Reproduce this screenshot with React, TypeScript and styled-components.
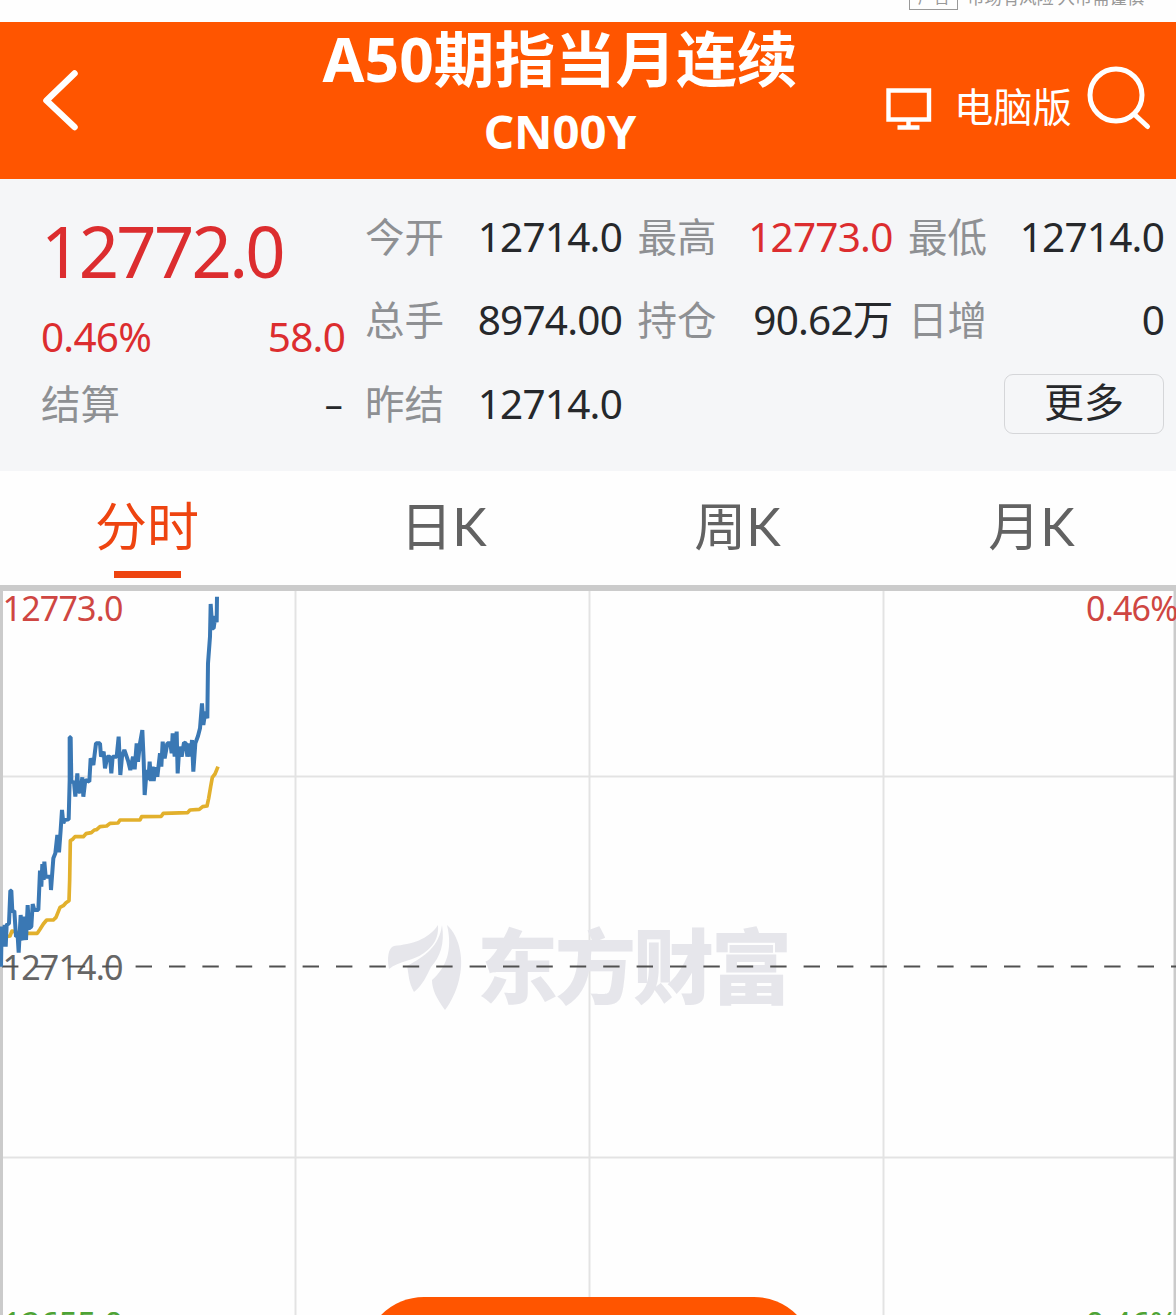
import React from 'react';
import styled, { createGlobalStyle } from 'styled-components';

const ORANGE = '#ff5500';
const RED = '#dc2d2f';
const INK = '#26282b';
const MUTED = '#8e9093';

const GlobalStyle = createGlobalStyle`
  * { box-sizing: border-box; }
  body {
    margin: 0;
    background: #fff;
    font-family: "Noto Sans", "Noto Sans CJK SC", sans-serif;
  }
`;

const Page = styled.div`
  position: relative;
  width: 1176px;
  height: 1315px;
  overflow: hidden;
  background: #fefefe;
`;

const AdStrip = styled.div`
  display: flex;
  justify-content: flex-end;
  align-items: flex-end;
  gap: 9px;
  height: 22px;
  padding: 0 32px 12px 0;
  color: #999;
  font: 17.3px/24px "Noto Sans CJK SC", sans-serif;
  white-space: nowrap;
`;

const AdTag = styled.span`
  flex: none;
  width: 49px;
  height: 26px;
  border: 1.5px solid #999;
  font-size: 16px;
  line-height: 23px;
  text-align: center;
`;

const AdText = styled.span`
  flex: none;
  height: 25px;
`;

const Header = styled.header`
  display: grid;
  grid-template-columns: 320px 480px 1fr;
  height: 157px;
  background: ${ORANGE};
  color: #fff;
`;

const BackButton = styled.div`
  padding: 46px 0 0 40px;
`;

const TitleBlock = styled.div`
  display: flex;
  flex-direction: column;
  align-items: center;
  font-weight: 700;
  white-space: nowrap;
`;

const Title = styled.div`
  height: 76px;
  font-size: 60.6px;
  line-height: 73px;
`;

const Code = styled.div`
  font-size: 47.3px;
  line-height: 66px;
`;

const Tools = styled.div`
  display: flex;
  align-items: flex-start;
  padding-left: 86px;
`;

const DesktopIcon = styled.svg`
  flex: none;
  margin-top: 64px;
`;

const DesktopLabel = styled.span`
  flex: none;
  width: 152px;
  padding: 57px 0 0 22px;
  font-size: 39.3px;
  line-height: 56px;
  white-space: nowrap;
`;

const SearchIcon = styled.svg`
  flex: none;
  margin-top: 42px;
`;

const Quote = styled.section`
  display: grid;
  grid-template-columns: 304px 1fr;
  column-gap: 20px;
  height: 292px;
  padding: 16px 12px 0 41px;
  background: #f5f6f8;
`;

const Summary = styled.div`
  display: grid;
  grid-template-rows: 112px 60px 74px;
`;

const Price = styled.div`
  align-self: center;
  color: ${RED};
  font-size: 70.5px;
  line-height: 110px;
  letter-spacing: -2.7px;
`;

const Row = styled.div`
  display: flex;
  justify-content: space-between;
  align-items: center;
  white-space: nowrap;
`;

const Stats = styled.div`
  display: grid;
  grid-template-columns: 257px 255px 256px;
  grid-template-rows: repeat(3, 83.5px);
  justify-content: space-between;
`;

const Label = styled.span`
  padding-bottom: 4px;
  color: ${MUTED};
  font: 39.5px/50px "Noto Sans CJK SC", sans-serif;
`;

const Value = styled.span<{ $up?: boolean }>`
  color: ${({ $up }) => ($up ? RED : INK)};
  font-size: 40.5px;
  line-height: 56px;
  letter-spacing: -0.8px;
`;

const Dash = styled(Value)`
  padding-right: 3px;
  font-size: 36px;
`;

const MoreButton = styled.div`
  justify-self: end;
  align-self: center;
  width: 160px;
  height: 60px;
  border: 1.5px solid #d5d6d9;
  border-radius: 9px;
  color: ${INK};
  font: 40px/51px "Noto Sans CJK SC", sans-serif;
  text-align: center;
`;

const Tabs = styled.nav`
  display: grid;
  grid-template-columns: repeat(4, 294px);
  height: 114px;
  background: #fefefe;
`;

const Tab = styled.div<{ $active?: boolean }>`
  display: flex;
  flex-direction: column;
  align-items: center;
  padding: 17px 0 0 ${({ $active }) => ($active ? 0 : 5)}px;
  color: ${({ $active }) => ($active ? '#ee4410' : '#626262')};
  font-family: Lato, "Noto Sans CJK SC", sans-serif;
  font-size: 52px;
  line-height: 76px;

  &::after {
    content: '';
    width: 67px;
    height: 7px;
    margin-top: 7px;
    background: ${({ $active }) => ($active ? '#ee4410' : 'transparent')};
  }
`;

const Chart = styled.svg`
  display: block;
  width: 1176px;
  height: 730px;
`;

const AxisText = styled.text`
  font-family: "Noto Sans", sans-serif;
  font-size: 34px;
  letter-spacing: -0.8px;
`;

const WatermarkText = styled.text`
  font-family: "Noto Sans CJK SC", sans-serif;
  font-size: 81px;
  font-weight: 900;
  fill: #e6e6eb;
`;

const BottomPill = styled.div`
  position: absolute;
  left: 364px;
  top: 1297px;
  width: 450px;
  height: 120px;
  border-radius: 60px;
  background: ${ORANGE};
`;

const stats = [
  { label: '今开', value: '12714.0' },
  { label: '最高', value: '12773.0', up: true },
  { label: '最低', value: '12714.0' },
  { label: '总手', value: '8974.00' },
  { label: '持仓', value: '90.62万' },
  { label: '日增', value: '0' },
  { label: '昨结', value: '12714.0' },
];

const tabs = ['分时', '日K', '周K', '月K'];

const priceLine =
  '3,1160 5,1040 10,1100 14,1035 17,1100 20,1035 27,1030 31,932 34,932 37,995 43,993 48,1070 53,1068 56,1118 62,1005 66,1070 70,1080 73,1010 78,1080 83,975 87,1045 94,1040 98,972 103,990 115,990 120,872 124,920 127,852 131,900 133,845 137,890 151,890 153,930 160,835 166,820 172,765 177,817 182,750 186,690 190,730 194,720 206,718 ' +
  '209,600 209,472 212,472 214,605 222,607 226,650 232,580 235,635 241,635 247,592 250,650 256,600 268,605 272,535 280,555 288,490 300,490 303,530 311,515 315,565 322,530 330,530 334,580 338,530 350,530 356,470 361,585 366,530 373,510 380,530 385,545 391,570 396,545 399,530 404,568 410,490 414,545 420,490 427,450 431,540 434,645 440,570 445,600 449,545 453,603 458,560 461,603 467,562 472,590 480,520 484,560 488,485 494,535 502,490 511,490 515,520 518,460 524,530 530,455 533,580 538,500 545,530 552,488 558,490 562,530 568,490 572,530 576,480 580,575 586,490 594,468 600,445 606,370 610,435 616,395 622,415 624,250 630,170 632,72 637,145 641,145 646,108 650,127 651,50';

const averageLine =
  '18,1070 30,1068 36,1053 60,1060 112,1060 120,1048 130,1032 140,1020 160,1020 168,1012 180,982 190,977 198,968 207,962 209,900 211,782 218,778 225,770 250,770 258,761 274,758 283,750 290,749 300,740 320,738 330,730 354,729 360,720 420,720 425,710 484,709 490,700 563,698 570,690 598,688 608,680 621,678 626,655 632,620 637,592 645,582 654,560';

export default function App() {
  return (
    <>
      <GlobalStyle />
      <Page>
        <AdStrip>
          <AdTag>广告</AdTag>
          <AdText>市场有风险 入市需谨慎</AdText>
        </AdStrip>

        <Header>
          <BackButton>
            <svg width="40" height="66" viewBox="0 0 40 66" fill="none" stroke="#fff" strokeWidth="6.5" strokeLinecap="round" strokeLinejoin="round">
              <path d="M34.5 5.5 6.5 32.500 34.500 59" />
            </svg>
          </BackButton>
          <TitleBlock>
            <Title>A50期指当月连续</Title>
            <Code>CN00Y</Code>
          </TitleBlock>
          <Tools>
            <DesktopIcon width="46" height="44" viewBox="0 0 46 44" fill="none" stroke="#fff" strokeWidth="4.4">
              <path d="M2.500 4.500H43V33.500H2.500ZM22.500 33V41M11.500 41.500H33.500" />
            </DesktopIcon>
            <DesktopLabel>电脑版</DesktopLabel>
            <SearchIcon width="72" height="72" viewBox="0 0 72 72" fill="none" stroke="#fff" strokeWidth="5" strokeLinecap="round">
              <circle cx="32" cy="31" r="26" />
              <path d="M50.500 50.500 63.500 62.500" />
            </SearchIcon>
          </Tools>
        </Header>

        <Quote>
          <Summary>
            <Price>12772.0</Price>
            <Row>
              <Value $up>0.46%</Value>
              <Value $up>58.0</Value>
            </Row>
            <Row>
              <Label>结算</Label>
              <Dash>–</Dash>
            </Row>
          </Summary>
          <Stats>
            {stats.map((s) => (
              <Row key={s.label}>
                <Label>{s.label}</Label>
                <Value $up={s.up}>{s.value}</Value>
              </Row>
            ))}
            <span />
            <MoreButton>更多</MoreButton>
          </Stats>
        </Quote>

        <Tabs>
          {tabs.map((t, i) => (
            <Tab key={t} $active={i === 0}>{t}</Tab>
          ))}
        </Tabs>

        <Chart viewBox="0 0 1176 730">
          <path d="M294.500 6h2V730h-2ZM588.500 6h2V730h-2ZM882.500 6h2V730h-2ZM3 190.500H1174v2H3ZM3 571.500H1174v2H3Z" fill="#e3e3e3" />
          <g fill="#e6e6eb">
            <path d="M389 969C387 958 388 948 394 946C412 944 428 940 438 925C439 937 434 946 424 953C413 961 399 961 389 969Z" transform="translate(0 -585)" />
            <path d="M442 925C445 944 440 957 431 967C427 975 423 985 414 992C408 981 409 974 407 966C425 956 439 947 442 925Z" transform="translate(0 -585)" />
            <path d="M447 925C461 938 464 962 459 980C456 992 451 1002 445 1010C437 999 432 990 432 980C446 968 453 950 447 925Z" transform="translate(0 -585)" />
          </g>
          <WatermarkText x="477" y="412" textLength="315">东方财富</WatermarkText>
          <path d="M0 3H1176" stroke="#cbcbcb" strokeWidth="6" />
          <path d="M1.500 0V730M1175 0V730" stroke="#cbcbcb" strokeWidth="3" />
          <AxisText x="2.500" y="36" fill="#cf4642">12773.0</AxisText>
          <AxisText x="1086" y="36" fill="#cf4642">0.46%</AxisText>
          <AxisText x="2.500" y="395" fill="#666">12714.0</AxisText>
          <AxisText x="2.500" y="752" fill="#4ea336">12655.0</AxisText>
          <AxisText x="1075" y="752" fill="#4ea336">-0.46%</AxisText>
          <path d="M2 381.500H1176" stroke="#505050" strokeWidth="2" strokeDasharray="16.400 17" />
          <g transform="translate(0 -5) scale(0.33333)" fill="none">
            <polyline points={averageLine} stroke="#e2b02c" strokeWidth="11" strokeLinejoin="round" />
            <polyline points={priceLine} stroke="#3a78b4" strokeWidth="12" strokeLinejoin="bevel" />
          </g>
        </Chart>

        <BottomPill />
      </Page>
    </>
  );
}
